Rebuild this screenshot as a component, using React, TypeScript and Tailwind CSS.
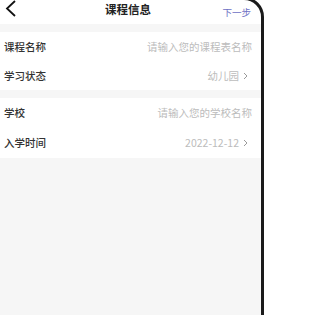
import { ReactNode } from "react";

const font = { fontFamily: '"Noto Sans CJK SC", "Noto Sans", sans-serif' };

function Chevron() {
  return (
    <svg width="5" height="8" viewBox="0 0 5 8" className="ml-[4px] mr-[4px]">
      <path d="M1 1l3 3-3 3" fill="none" stroke="#9a9a9a" strokeWidth="1" />
    </svg>
  );
}

function Row({ label, tall, children }: { label: string; tall?: boolean; children: ReactNode }) {
  return (
    <div className={`flex items-center justify-between pl-[4px] pr-[12px] ${tall ? "h-[30px]" : "h-[29px]"}`}>
      <span className="text-[10.5px] font-medium text-[#333]">{label}</span>
      <span className="flex items-center text-[10.5px] text-[#bcbcbc]">{children}</span>
    </div>
  );
}

export default function App() {
  return (
    <div className="relative h-[315px] w-[264px] overflow-hidden bg-[#f6f6f6]" style={font}>
      {/* header */}
      <div className="relative flex h-[24px] items-center justify-between bg-white pl-[5px] pr-[13px]">
        <svg width="12" height="17" viewBox="0 0 12 17" className="-mt-[8px]">
          <path d="M10 1L2 8.5l8 7.5" fill="none" stroke="#111" strokeWidth="1.8" />
        </svg>
        <span className="absolute left-[105px] top-[1px] text-[11.5px] font-bold text-[#222]">
          课程信息
        </span>
        <span className="text-[9.5px] text-[#6d6fc4]">下一步</span>
      </div>

      <div className="mt-[8px] bg-white">
        <Row label="课程名称">请输入您的课程表名称</Row>
        <Row label="学习状态">
          幼儿园
          <Chevron />
        </Row>
      </div>

      <div className="mt-[8px] bg-white">
        <Row label="学校" tall>请输入您的学校名称</Row>
        <Row label="入学时间" tall>
          2022-12-12
          <Chevron />
        </Row>
      </div>

      {/* device frame edge */}
      <div className="pointer-events-none absolute -left-[20px] -top-[3px] bottom-[-20px] right-0 rounded-tr-[20px] border-[3px] border-[#1a1a1a]" />
    </div>
  );
}
